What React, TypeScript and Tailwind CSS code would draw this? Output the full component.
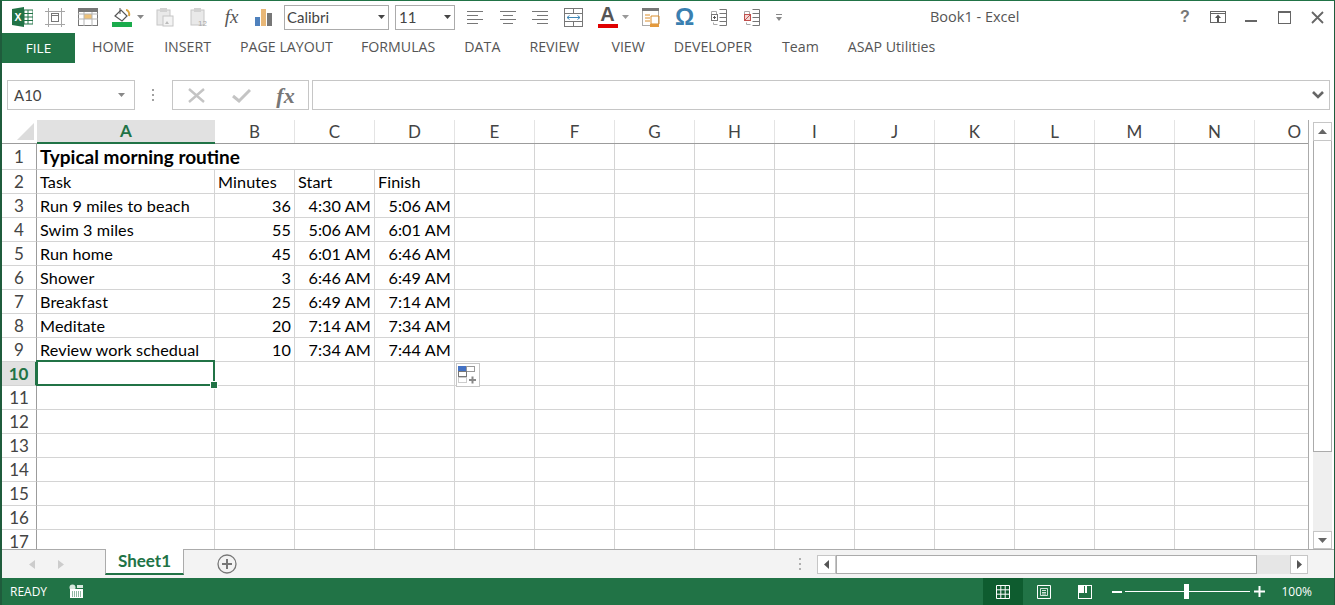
import React from "react";

const cellFont = { fontFamily: '"Lato","Liberation Sans",sans-serif' };

const letters = "ABCDEFGHIJKLMNO".split("");
const cols = [178, 80, 80, 80, 80, 80, 80, 80, 80, 80, 80, 80, 80, 80, 54];

const data: Record<number, string[]> = {
  2: ["Task", "Minutes", "Start", "Finish"],
  3: ["Run 9 miles to beach", "36", "4:30 AM", "5:06 AM"],
  4: ["Swim 3 miles", "55", "5:06 AM", "6:01 AM"],
  5: ["Run home", "45", "6:01 AM", "6:46 AM"],
  6: ["Shower", "3", "6:46 AM", "6:49 AM"],
  7: ["Breakfast", "25", "6:49 AM", "7:14 AM"],
  8: ["Meditate", "20", "7:14 AM", "7:34 AM"],
  9: ["Review work schedual", "10", "7:34 AM", "7:44 AM"],
};

function Caret({ c = "#666" }: { c?: string }) {
  return (
    <svg width="7" height="4" viewBox="0 0 7 4" className="shrink-0">
      <path d="M0 0h7L3.5 4z" fill={c} />
    </svg>
  );
}

function Slot({ w = 33, children }: { w?: number; children: React.ReactNode }) {
  return (
    <div className="flex items-center justify-center shrink-0 h-full" style={{ width: w }}>
      {children}
    </div>
  );
}

function ExcelLogo() {
  return (
    <svg width="21" height="20" viewBox="0 0 21 20">
      <rect x="9" y="3" width="12" height="14" fill="#fff" stroke="#217346" />
      <path d="M12 3v14M16 3v14M9 6.5h12M9 10h12M9 13.5h12" stroke="#217346" strokeWidth="1" />
      <path d="M0 2l12-2v20L0 18z" fill="#217346" />
      <text x="2.6" y="14" fontSize="10.5" fontWeight="700" fill="#fff" fontFamily="Liberation Sans">X</text>
    </svg>
  );
}

function FreezeIcon() {
  return (
    <svg width="20" height="19" viewBox="0 0 20 19" fill="none" stroke="#8a8a8a">
      <path d="M3.5 0v19M16.5 0v19M0 3.5h20M0 16.5h20" stroke="#a5a5a5" />
      <rect x="6.5" y="5.5" width="7" height="8" stroke="#777" />
      <path d="M6.5 7.5h7" stroke="#777" />
    </svg>
  );
}

function TableIcon() {
  return (
    <svg width="20" height="18" viewBox="0 0 20 18" fill="none">
      <rect x="0.5" y="0.5" width="19" height="17" stroke="#777" />
      <rect x="1" y="1" width="18" height="3" fill="#777" />
      <rect x="6" y="6" width="8" height="5" fill="#eec27a" />
      <path d="M0 6h20M0 11h20M6 4v14M14 4v14" stroke="#b5b5b5" />
    </svg>
  );
}

function FillIcon() {
  return (
    <svg width="20" height="20" viewBox="0 0 20 20" fill="none">
      <path d="M3 9l6-6 6 6-5 5z" fill="#fff" stroke="#555" strokeWidth="1.2" />
      <path d="M8 1v6" stroke="#555" />
      <path d="M14 3c2 0 4 3 3 6" stroke="#d9a441" strokeWidth="2" />
      <rect x="0" y="15" width="20" height="5" fill="#1aab4c" />
    </svg>
  );
}

function ClipIcon({ n }: { n?: boolean }) {
  return (
    <svg width="19" height="20" viewBox="0 0 19 20" fill="none">
      <rect x="1" y="3" width="13" height="15" fill="#e9e9e9" stroke="#c6c6c6" />
      <rect x="4" y="1" width="7" height="4" fill="#d2d2d2" />
      {n ? (
        <text x="8" y="19" fontSize="8" fill="#aaa" fontFamily="Liberation Sans">12</text>
      ) : (
        <g>
          <rect x="7" y="9" width="10" height="10" fill="#f3f3f3" stroke="#c6c6c6" />
          <path d="M9 17l2-3 2 3z" fill="#bbb" />
        </g>
      )}
    </svg>
  );
}

function Bars() {
  return (
    <svg width="17" height="18" viewBox="0 0 17 18">
      <rect x="0" y="9" width="5" height="9" fill="#4f81bd" />
      <rect x="6" y="1" width="5" height="17" fill="#e8b777" />
      <rect x="12" y="5" width="5" height="13" fill="#777" />
    </svg>
  );
}

function AlignIcon({ kind }: { kind: "l" | "c" | "r" }) {
  const lines =
    kind === "l"
      ? ["M0 .5h16", "M0 4.5h11", "M0 8.5h16", "M0 12.5h11"]
      : kind === "c"
        ? ["M0 .5h16", "M3 4.5h10", "M0 8.5h16", "M3 12.5h10"]
        : ["M0 .5h16", "M5 4.5h11", "M0 8.5h16", "M5 12.5h11"];
  return (
    <svg width="16" height="13" viewBox="0 0 16 13" fill="none" stroke="#777">
      {lines.map((d) => (
        <path key={d} d={d} />
      ))}
    </svg>
  );
}

function MergeIcon() {
  return (
    <svg width="19" height="19" viewBox="0 0 19 19" fill="none">
      <rect x="0.5" y="0.5" width="18" height="18" stroke="#777" />
      <path d="M0 5.5h19M0 13.5h19M9.5 0v5M9.5 14v5" stroke="#777" />
      <path d="M3 9.5h13M3 9.5l2.5-2M3 9.5l2.5 2M16 9.5l-2.5-2M16 9.5l-2.5 2" stroke="#3f86b5" />
    </svg>
  );
}

function ColorA() {
  return (
    <div className="flex flex-col items-center w-[20px] h-[22px]">
      <span className="text-[20px] leading-[17px] font-bold text-[#555]" style={{ fontFamily: '"Liberation Sans",sans-serif' }}>A</span>
      <span className="w-[20px] h-[5px] bg-[#e00000] mt-[1px]" />
    </div>
  );
}

function CalIcon() {
  return (
    <svg width="19" height="19" viewBox="0 0 19 19" fill="none">
      <rect x="0.5" y="0.5" width="16" height="17" fill="#fff" stroke="#aaa" />
      <rect x="0" y="0" width="17" height="3" fill="#777" />
      <path d="M3 7h5M3 10h5M3 13h5" stroke="#d98c2b" />
      <path d="M9 8h8v8H9z" stroke="#d98c2b" />
      <rect x="8" y="16" width="9" height="3" fill="#e49a3d" />
    </svg>
  );
}

function SplitIcon({ red }: { red?: boolean }) {
  return (
    <svg width="16" height="17" viewBox="0 0 16 17" fill="none">
      <path d="M8.5.5h7v16h-7M8.5 4.5h7M8.5 8.5h7M8.5 12.5h7" stroke="#777" />
      <path d="M5.5 2.5h-5v5h5z" stroke="#aaa" />
      <rect x="0.5" y="5.5" width="6" height="6" stroke={red ? "#c0504d" : "#777"} fill={red ? "#f2d5d3" : "#fff"} />
      {red ? <path d="M1 11l5-5" stroke="#c0504d" /> : <path d="M2 8.5h3M3.5 7v3" stroke="#555" />}
      <path d="M2.5 13.5v2h4" stroke="#aaa" />
    </svg>
  );
}

function TitleBar() {
  return (
    <div className="h-[32px] flex items-center shrink-0 relative">
      <div className="w-[3px] shrink-0" />
      <Slot w={34}><ExcelLogo /></Slot>
      <Slot w={32}><FreezeIcon /></Slot>
      <Slot w={33}><TableIcon /></Slot>
      <Slot w={45}>
        <div className="flex items-center gap-[5px] pl-[3px]"><FillIcon /><Caret c="#888" /></div>
      </Slot>
      <Slot w={33}><ClipIcon /></Slot>
      <Slot w={34}><ClipIcon n /></Slot>
      <Slot w={31}>
        <span className="text-[19px] italic text-[#555]" style={{ fontFamily: '"Liberation Serif",serif' }}>fx</span>
      </Slot>
      <Slot w={33}><Bars /></Slot>
      <div className="ml-[4px] w-[105px] h-[25px] border border-[#ababab] flex items-center justify-between pl-[2px] pr-[3px] text-[#444] text-[15px] shrink-0" style={cellFont}>
        <span>Calibri</span><Caret c="#444" />
      </div>
      <div className="ml-[6px] w-[60px] h-[25px] border border-[#ababab] flex items-center justify-between pl-[3px] pr-[3px] text-[#444] text-[15px] shrink-0" style={cellFont}>
        <span>11</span><Caret c="#444" />
      </div>
      <div className="w-[3px] shrink-0" />
      <Slot w={33}><AlignIcon kind="l" /></Slot>
      <Slot w={33}><AlignIcon kind="c" /></Slot>
      <Slot w={32}><AlignIcon kind="r" /></Slot>
      <Slot w={34}><MergeIcon /></Slot>
      <Slot w={45}>
        <div className="flex items-center gap-[4px] pl-[1px]"><ColorA /><Caret c="#999" /></div>
      </Slot>
      <Slot w={32}><CalIcon /></Slot>
      <Slot w={35}>
        <span className="text-[24px] font-bold leading-none text-[#3a7fb0]" style={{ fontFamily: '"Liberation Sans",sans-serif' }}>Ω</span>
      </Slot>
      <Slot w={33}><SplitIcon /></Slot>
      <Slot w={34}><SplitIcon red /></Slot>
      <Slot w={19}>
        <svg width="6" height="7" viewBox="0 0 6 7"><path d="M0 .5h6" stroke="#888" /><path d="M0 3h6L3 7z" fill="#888" /></svg>
      </Slot>
      <div className="flex-1 pl-[142px] text-[14.5px] text-[#555]" style={{ fontFamily: '"Open Sans",sans-serif' }}>
        <span>Book1 - Excel</span>
      </div>
      <div className="flex items-center h-full shrink-0">
        <Slot w={32}><span className="text-[16px] font-bold text-[#777]" style={{ fontFamily: '"Liberation Sans",sans-serif' }}>?</span></Slot>
        <Slot w={34}>
          <svg width="16" height="12" viewBox="0 0 16 12" fill="none">
            <rect x="0.5" y="0.5" width="15" height="11" stroke="#666" />
            <path d="M0 2.5h16" stroke="#666" />
            <path d="M8 3.5L5 7h2v4h2V7h2z" fill="#555" />
          </svg>
        </Slot>
        <Slot w={32}><svg width="12" height="12" viewBox="0 0 12 12"><rect x="0" y="9" width="12" height="2" fill="#666" /></svg></Slot>
        <Slot w={34}>
          <svg width="13" height="13" viewBox="0 0 13 13" fill="none">
            <rect x="0.5" y="0.5" width="12" height="12" stroke="#666" />
            <rect x="0" y="0" width="13" height="2" fill="#666" />
          </svg>
        </Slot>
        <Slot w={33}>
          <svg width="13" height="13" viewBox="0 0 13 13" fill="none" stroke="#666" strokeWidth="1.8"><path d="M1 1l11 11M12 1L1 12" /></svg>
        </Slot>
      </div>
    </div>
  );
}

function Tabs() {
  const tabs: [string, number][] = [
    ["HOME", 17],
    ["INSERT", 30],
    ["PAGE LAYOUT", 29],
    ["FORMULAS", 28],
    ["DATA", 29],
    ["REVIEW", 29],
    ["VIEW", 32],
    ["DEVELOPER", 29],
    ["Team", 30],
    ["ASAP Utilities", 29],
  ];
  return (
    <div className="h-[30px] flex items-center shrink-0 text-[#555]" style={{ fontFamily: '"Open Sans",sans-serif' }}>
      <div className="w-[73px] h-full bg-[#217346] text-white flex items-center justify-center text-[13.5px]">FILE</div>
      <div className="flex items-center mb-[2px] text-[14.2px]">
        {tabs.map(([t, m]) => (
          <span key={t} style={{ marginLeft: m }}>{t}</span>
        ))}
      </div>
    </div>
  );
}

function FormulaBar() {
  return (
    <div className="h-[30px] mt-[17px] flex items-stretch pl-[5px] pr-[4px] shrink-0">
      <div className="w-[128px] border border-[#c6c6c6] flex items-center justify-between pl-[6px] pr-[9px] text-[15px] text-[#444]" style={cellFont}>
        <span>A10</span><Caret c="#888" />
      </div>
      <div className="w-[37px] pr-[2px] flex flex-col items-center justify-center gap-[3px]">
        <span className="w-[2px] h-[2px] bg-[#a0a0a0]" />
        <span className="w-[2px] h-[2px] bg-[#a0a0a0]" />
        <span className="w-[2px] h-[2px] bg-[#a0a0a0]" />
      </div>
      <div className="w-[137px] border border-[#c6c6c6] flex items-center">
        <div className="w-[46px] flex justify-center">
          <svg width="17" height="15" viewBox="0 0 17 15" fill="none" stroke="#c4c4c4" strokeWidth="2.4"><path d="M1 1l15 13M16 1L1 14" /></svg>
        </div>
        <div className="w-[44px] flex justify-center pt-[1px]">
          <svg width="19" height="14" viewBox="0 0 19 14" fill="none" stroke="#c4c4c4" strokeWidth="3"><path d="M1 7l6 5L18 1" /></svg>
        </div>
        <div className="w-[45px] flex justify-center">
          <span className="text-[22px] font-bold italic text-[#777]" style={{ fontFamily: '"Liberation Serif",serif' }}>fx</span>
        </div>
      </div>
      <div className="ml-[3px] flex-1 border border-[#c6c6c6] flex items-center justify-end pr-[5px]">
        <svg width="12" height="8" viewBox="0 0 12 8" fill="none" stroke="#666" strokeWidth="2.6"><path d="M1 1l5 5 5-5" /></svg>
      </div>
    </div>
  );
}

function HeaderRow() {
  return (
    <div className="flex h-[24px] shrink-0 border-b border-[#9c9c9c] text-[17px] text-[#444]" style={cellFont}>
      <div className="w-[35px] shrink-0 flex justify-end items-start pr-[3px] pt-[3px]">
        <svg width="17" height="17" viewBox="0 0 17 17"><path d="M17 0v17H0z" fill="#dcdcdc" /></svg>
      </div>
      {letters.map((l, i) => (
        <div
          key={l}
          style={{ width: cols[i] }}
          className={
            i === 0
              ? "shrink-0 bg-[#e1e1e1] border-b-2 border-[#217346] h-[24px] flex items-center justify-center font-bold text-[#217346]"
              : i === 14
                ? "shrink-0 flex items-center justify-end pr-[8px]"
                : "shrink-0 border-r border-[#e4e4e4] flex items-center justify-center"
          }
        >
          {l}
        </div>
      ))}
    </div>
  );
}

function Row({ n }: { n: number }) {
  const h = n === 1 ? 26 : 24;
  const vals = data[n];
  const selected = n === 10;
  return (
    <div className={selected ? "flex shrink-0 relative z-10" : "flex shrink-0 relative"} style={{ height: h }}>
      <div
        className={
          selected
            ? "w-[35px] shrink-0 bg-[#e1e1e1] border-r-2 border-[#217346] border-b border-b-[#d4d4d4] flex items-center justify-center pt-[1px] text-[17px] font-bold text-[#217346]"
            : "w-[35px] shrink-0 border-r border-[#9c9c9c] border-b border-b-[#d4d4d4] flex items-center justify-center pt-[1px] text-[17px] text-[#444]"
        }
      >
        {n}
      </div>
      {cols.map((w, i) => {
        const v = vals ? vals[i] : undefined;
        const right = i > 0 && n > 2 && v !== undefined;
        const borderR = n === 1 && i < 3 ? "" : "border-r";
        return (
          <div
            key={i}
            style={{ width: w }}
            className={`shrink-0 ${borderR} border-b border-[#d4d4d4] flex items-center pt-[1px] whitespace-nowrap text-[16.2px] tracking-[0.1px] text-black ${
              right ? "justify-end pr-[3px]" : "pl-[3px]"
            }`}
          >
            {v}
          </div>
        );
      })}
      {n === 1 && (
        <div className="absolute left-[38px] top-0 h-[26px] flex items-center text-[19px] font-bold text-black whitespace-nowrap">
          Typical morning routine
        </div>
      )}
      {selected && (
        <>
          <div className="absolute left-[34px] top-[-2px] w-[179px] h-[26px] border-2 border-[#217346]" />
          <div className="absolute left-[208px] top-[19px] w-[6px] h-[6px] bg-[#217346] border border-white box-content" />
          <div className="absolute left-[454px] top-[1px] w-[24px] h-[24px] bg-white border border-[#c6c6c6] flex items-center justify-center">
            <svg width="20" height="18" viewBox="0 0 20 18" fill="none">
              <rect x="0" y="0" width="8" height="5" fill="#4472c4" />
              <rect x="8.5" y="0.5" width="8" height="5" stroke="#999" />
              <rect x="0.5" y="5.5" width="8" height="5" stroke="#777" />
              <rect x="0.5" y="11.5" width="8" height="5" stroke="#999" strokeDasharray="1 1" />
              <path d="M11 14h7M14.5 10.5v7" stroke="#888" strokeWidth="2" />
            </svg>
          </div>
        </>
      )}
    </div>
  );
}

function VScroll() {
  return (
    <div className="w-[19px] ml-[4px] shrink-0 flex flex-col mt-[2px] bg-[#efefef]">
      <div className="h-[19px] border border-[#c6c6c6] bg-white flex items-center justify-center shrink-0">
        <svg width="9" height="5" viewBox="0 0 9 5"><path d="M0 5h9L4.5 0z" fill="#666" /></svg>
      </div>
      <div className="h-[311px] border-x border-b border-[#ababab] bg-white shrink-0" />
      <div className="flex-1" />
      <div className="h-[18px] border border-[#c6c6c6] bg-white flex items-center justify-center shrink-0">
        <svg width="9" height="5" viewBox="0 0 9 5"><path d="M0 0h9L4.5 5z" fill="#666" /></svg>
      </div>
    </div>
  );
}

function SheetTabs() {
  return (
    <div className="h-[29px] flex shrink-0 border-t border-[#ababab] bg-[#f3f3f3]" style={cellFont}>
      <div className="w-[103px] shrink-0 flex items-center pl-[27px] gap-[23px]">
        <svg width="6" height="9" viewBox="0 0 6 9"><path d="M6 0v9L0 4.5z" fill="#ccc" /></svg>
        <svg width="6" height="9" viewBox="0 0 6 9"><path d="M0 0v9l6-4.5z" fill="#ccc" /></svg>
      </div>
      <div className="w-[79px] h-[26px] mt-[-1px] bg-white border-x border-[#ababab] border-b-2 border-b-[#217346] shrink-0 flex items-center justify-center text-[17px] font-bold text-[#217346]">
        Sheet1
      </div>
      <div className="ml-[33px] w-[20px] shrink-0 flex items-center justify-center">
        <svg width="20" height="20" viewBox="0 0 20 20" fill="none" stroke="#777">
          <circle cx="10" cy="10" r="9" strokeWidth="1.3" />
          <path d="M10 5v10M5 10h10" strokeWidth="2" />
        </svg>
      </div>
      <div className="flex-1" />
      <div className="w-[12px] mr-[11px] flex flex-col items-center justify-center gap-[3px]">
        <span className="w-[2px] h-[2px] bg-[#b0b0b0]" />
        <span className="w-[2px] h-[2px] bg-[#b0b0b0]" />
        <span className="w-[2px] h-[2px] bg-[#b0b0b0]" />
      </div>
      <div className="w-[491px] h-[19px] mt-[5px] flex mr-[26px] shrink-0 bg-[#e6e6e6]">
        <div className="w-[19px] border border-[#c6c6c6] bg-white flex items-center justify-center shrink-0">
          <svg width="5" height="9" viewBox="0 0 5 9"><path d="M5 0v9L0 4.5z" fill="#555" /></svg>
        </div>
        <div className="w-[421px] border border-[#ababab] bg-white shrink-0" />
        <div className="flex-1" />
        <div className="w-[18px] border border-[#c6c6c6] bg-white flex items-center justify-center shrink-0">
          <svg width="5" height="9" viewBox="0 0 5 9"><path d="M0 0v9l5-4.5z" fill="#555" /></svg>
        </div>
      </div>
    </div>
  );
}

function StatusBar() {
  return (
    <div className="h-[27px] bg-[#217346] flex items-center shrink-0 text-white text-[12px]" style={{ fontFamily: '"Open Sans",sans-serif' }}>
      <span className="ml-[8px]">READY</span>
      <div className="ml-[22px]">
        <svg width="15" height="15" viewBox="0 0 15 15" fill="none">
          <circle cx="3.5" cy="3.5" r="3" fill="#d8e8de" />
          <rect x="1" y="5" width="13" height="9" fill="#fff" />
          <rect x="8" y="1" width="6" height="3" fill="#d8e8de" />
          <path d="M3 8h9M3 10h9M3 12h9" stroke="#217346" strokeDasharray="1 1" />
        </svg>
      </div>
      <div className="flex-1" />
      <div className="w-[40px] h-full bg-[#0e5c2f] flex items-center justify-center">
        <svg width="14" height="14" viewBox="0 0 14 14" fill="none" stroke="#fff"><path d="M.5.5h13v13H.5zM.5 4.8h13M.5 9.2h13M4.8.5v13M9.2.5v13" /></svg>
      </div>
      <div className="w-[41px] flex items-center justify-center">
        <svg width="14" height="14" viewBox="0 0 14 14" fill="none" stroke="#fff"><path d="M.5.5h13v13H.5z" /><path d="M3.5 3.5h7v7h-7zM5 5.5h4M5 7.5h4M5 9h4" strokeWidth=".8" /></svg>
      </div>
      <div className="w-[41px] flex items-center justify-center">
        <svg width="14" height="14" viewBox="0 0 14 14" fill="none"><rect x=".5" y=".5" width="13" height="13" stroke="#fff" /><rect x="1" y="1" width="5" height="7" fill="#fff" /><rect x="7" y="1" width="2" height="7" fill="#fff" /></svg>
      </div>
      <div className="ml-[7px] w-[10px] h-[2px] bg-white" />
      <div className="ml-[3px] w-[125px] h-[1px] bg-white relative">
        <div className="absolute left-[59px] top-[-7px] w-[5px] h-[15px] bg-white" />
      </div>
      <div className="ml-[4px]">
        <svg width="11" height="11" viewBox="0 0 11 11" fill="none" stroke="#fff" strokeWidth="2"><path d="M0 5.5h11M5.5 0v11" /></svg>
      </div>
      <span className="ml-[16px] mr-[22px] text-[12px]">100%</span>
    </div>
  );
}

export default function App() {
  const rows = Array.from({ length: 17 }, (_, i) => i + 1);
  return (
    <div className="w-[1335px] h-[605px] overflow-hidden bg-white flex flex-col border-t border-t-[#217346] border-l-2 border-l-[#1f5c3c] border-r border-r-[#1f5c3c]">
      <TitleBar />
      <Tabs />
      <FormulaBar />
      <div className="h-[429px] mt-[10px] flex shrink-0 overflow-hidden">
        <div className="w-[1307px] shrink-0 overflow-hidden border-r border-[#ababab]" style={cellFont}>
          <HeaderRow />
          {rows.map((n) => (
            <Row key={n} n={n} />
          ))}
        </div>
        <VScroll />
      </div>
      <SheetTabs />
      <StatusBar />
    </div>
  );
}
